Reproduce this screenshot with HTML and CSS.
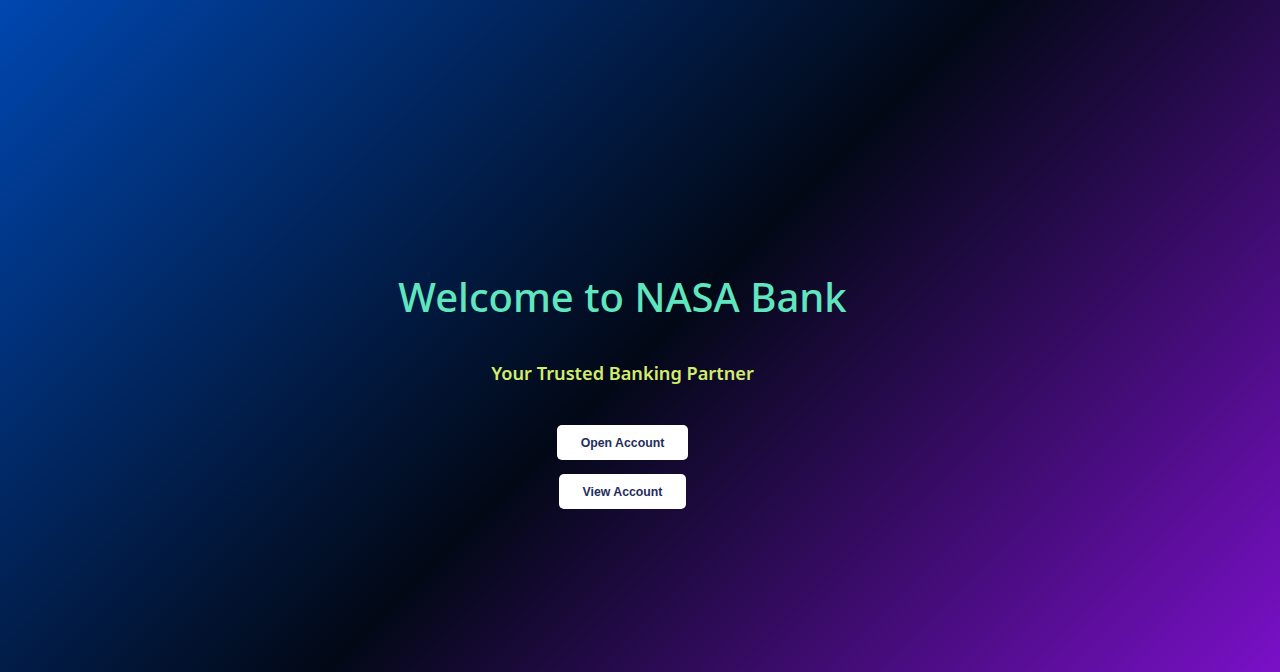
FILE: index.html
```html
<!DOCTYPE html>
<html lang="en">
<head>
<meta charset="utf-8">
<title>NASA Bank</title>
<link rel="stylesheet" href="styles.css">
</head>
<body>
<main class="hero">
  <h1 class="title">Welcome to NASA Bank</h1>
  <p class="subtitle">Your Trusted Banking Partner</p>
  <div class="actions">
    <button class="btn">Open Account</button>
    <button class="btn">View Account</button>
  </div>
</main>
</body>
</html>
```
FILE: styles.css
```css
html, body {
  margin: 0;
  height: 100%;
}
body {
  background: linear-gradient(135deg, #0047b0 0%, #020816 51%, #7a10c8 100%);
  font-family: "Noto Sans", "Open Sans", sans-serif;
  overflow: hidden;
}
.hero {
  height: 672px;
  box-sizing: border-box;
  padding-right: 35px;
  display: flex;
  flex-direction: column;
  align-items: center;
  justify-content: flex-start;
  padding-top: 270px;
}
.title {
  margin: 0;
  font-size: 40px;
  font-weight: 500;
  color: #60e6bf;
  line-height: 54px;
}
.subtitle {
  margin: 36px 0 0;
  font-size: 18.2px;
  font-weight: 600;
  color: #d3ec6e;
  line-height: 26px;
}
.actions {
  margin-top: 39px;
  display: flex;
  flex-direction: column;
  align-items: center;
  gap: 14px;
}
.btn {
  font-family: "Liberation Sans", Arial, sans-serif;
  font-size: 12.3px;
  font-weight: 700;
  color: #1f2d5c;
  background: #ffffff;
  border: none;
  border-radius: 5px;
  height: 35px;
  padding: 0 24px;
  cursor: pointer;
}
```
